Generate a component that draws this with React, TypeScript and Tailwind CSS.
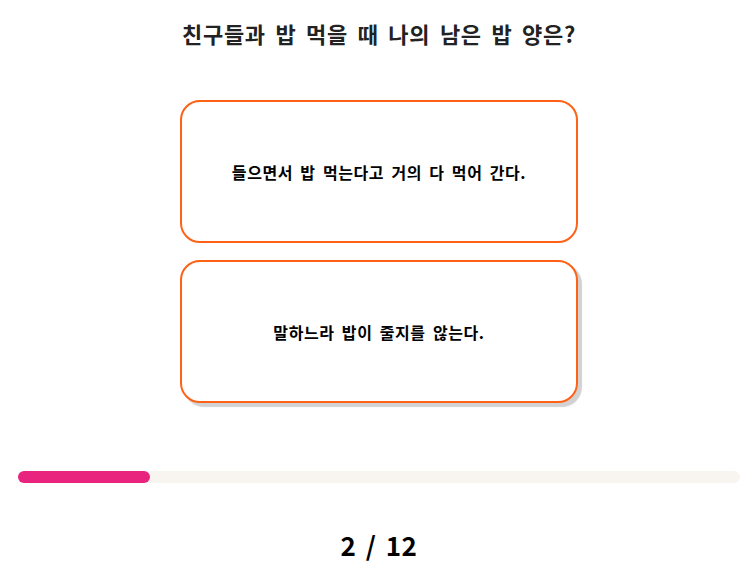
import React from "react";

export default function App() {
  const font = { fontFamily: '"Noto Sans CJK KR", "Noto Sans", sans-serif' };
  return (
    <div className="w-[755px] h-[582px] bg-white pl-[18px] pr-[15px] flex flex-col items-center" style={font}>
      <h1 className="mt-[17px] text-[22px] leading-[32px] font-bold text-[#222] tracking-[0.7px] [word-spacing:4px]">
        친구들과 밥 먹을 때 나의 남은 밥 양은?
      </h1>
      <div className="mt-[51px] flex flex-col gap-[17px]">
        <button className="w-[398px] h-[143px] rounded-[20px] border-2 border-[#ff6216] bg-white flex items-center justify-center text-[16px] font-bold text-black tracking-[0.6px] [word-spacing:3px]">
          들으면서 밥 먹는다고 거의 다 먹어 간다.
        </button>
        <button className="w-[398px] h-[143px] rounded-[20px] border-2 border-[#ff6216] bg-white flex items-center justify-center text-[16px] font-bold text-black tracking-[0.6px] [word-spacing:3px] shadow-[4px_4px_1px_#d2d2d2]">
          말하느라 밥이 줄지를 않는다.
        </button>
      </div>
      <div className="mt-[68px] w-full h-[12px] rounded-full bg-[#f8f5f1]">
        <div className="h-full w-[132px] rounded-full bg-[#e8247f]" />
      </div>
      <div className="mt-[46px] text-[26px] leading-[32px] font-bold text-black tracking-[0.5px] [word-spacing:3px]">2 / 12</div>
    </div>
  );
}
